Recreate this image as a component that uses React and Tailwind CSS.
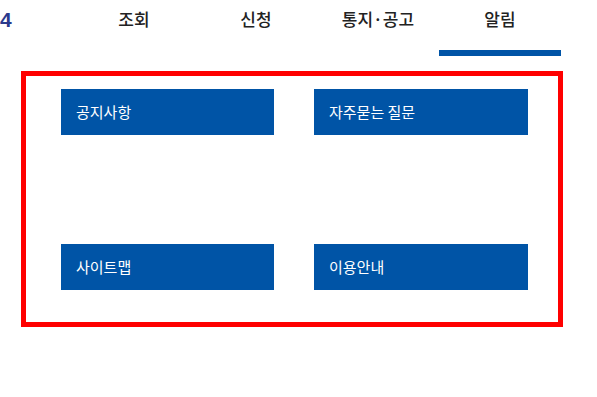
import React from "react";

const tabs = [
  { id: 1, label: "조회" },
  { id: 2, label: "신청" },
  { id: 3, label: "통지·공고" },
  { id: 4, label: "알림", active: true },
];

const menus = ["공지사항", "자주묻는 질문", "사이트맵", "이용안내"];

export default function App() {
  return (
    <div
      className="w-[597px] h-[397px] bg-white overflow-hidden"
      style={{ fontFamily: '"Noto Sans CJK KR", "Noto Sans", sans-serif' }}
    >
      {/* 상단 메뉴 */}
      <div className="flex h-[56px]">
        <div
          className="w-[73px] pt-[8px] text-[21px] leading-[24px] font-bold text-[#2b3a8c]"
          style={{ fontFamily: '"Liberation Sans", Arial, sans-serif' }}
        >
          4
        </div>
        {tabs.map((tab) => (
          <div key={tab.id} className="w-[122px] flex flex-col">
            <div className="flex-1 pt-[6px] text-center text-[17px] leading-[26px] font-medium text-[#222]">
              {tab.label}
            </div>
            {tab.active && <div className="h-[6px] bg-[#0054a6]" />}
          </div>
        ))}
      </div>

      {/* 알림 하위 메뉴 */}
      <div className="ml-[21px] mt-[15px] w-[542px] h-[256px] border-[5px] border-[#ff0000] pl-[35px] pt-[13px]">
        <div className="grid grid-cols-[213px_214px] gap-x-[40px] gap-y-[109px]">
          {menus.map((m) => (
            <div
              key={m}
              className="h-[46px] bg-[#0054a6] flex items-center pl-[15px] text-[15px] text-white"
            >
              {m}
            </div>
          ))}
        </div>
      </div>
    </div>
  );
}
